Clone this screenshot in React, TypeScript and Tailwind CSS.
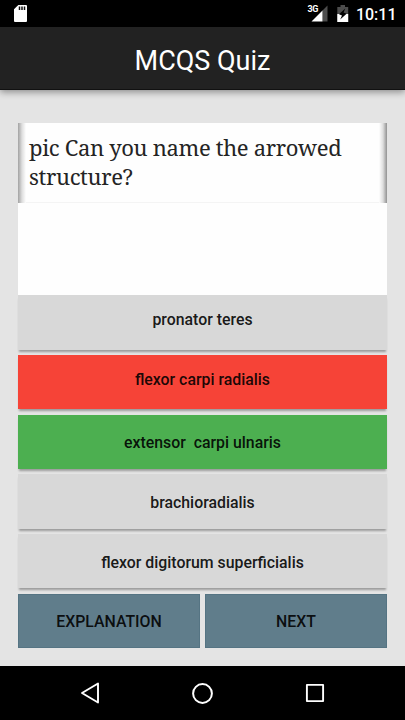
import React from "react";

type Answer = { label: string; className: string };

const answers: Answer[] = [
  { label: "pronator teres", className: "h-[55px] mb-[5px] pb-[5px] bg-[#d8d8d8]" },
  { label: "flexor carpi radialis", className: "h-[54px] mb-[6px] pb-[5px] bg-[#f64337]" },
  { label: "extensor  carpi ulnaris", className: "h-[54px] mb-[5px] pt-[2px] bg-[#4caf50]" },
  { label: "brachioradialis", className: "h-[55px] mb-[5px] pt-[2px] bg-[#d8d8d8]" },
  { label: "flexor digitorum superficialis", className: "h-[54px] mb-[6px] pt-[3px] bg-[#d8d8d8]" },
];

function StatusBar() {
  return (
    <div className="flex h-[27px] shrink-0 items-start bg-black text-white">
      <svg className="mt-[5px] ml-[14px] shrink-0" width="13" height="17" viewBox="0 0 13 17">
        <path d="M4.3 0H12Q13 0 13 1V16Q13 17 12 17H1Q0 17 0 16V4.3Z" fill="#fff" />
        <path d="M5.5 1.5V5M8 1.5V5M10.5 1.5V5" stroke="#111" strokeWidth="1.5" />
      </svg>
      <span className="mt-[4px] ml-auto text-[9px] leading-[11px] font-bold tracking-[-0.4px]">3G</span>
      <svg className="mt-[5px] -ml-[7px] shrink-0" width="17" height="17" viewBox="0 0 17 17">
        <path d="M11.5 5.5L16.5 0.5V16.5H11.5Z" fill="#4d4d4d" />
        <path d="M0.5 16.5L11.5 5.5V16.5Z" fill="#fff" />
      </svg>
      <svg className="mt-[5px] ml-[9px] shrink-0" width="12" height="17" viewBox="0 0 12 17">
        <path d="M3.5 0H8V2H11.2V17H0.3V2H3.5Z" fill="#4d4d4d" />
        <path d="M0.3 9H11.2V17H0.3Z" fill="#fff" />
        <path d="M8.2 3.6L2 9.2L5 10.6L3.2 14.4L9.6 8.8L6.6 7.4Z" fill="#000" />
      </svg>
      <span className="mt-[5px] mr-[8.5px] ml-[7px] text-[16px] leading-[20px] font-medium">10:11</span>
    </div>
  );
}

function NavigationBar() {
  return (
    <div className="flex h-[54px] shrink-0 items-center bg-black pl-[79px]">
      <svg width="22" height="22" viewBox="0 0 22 22" fill="none" stroke="#fff" strokeWidth="1.9" strokeLinejoin="round">
        <path d="M19 1.5V20.5L3 11Z" />
      </svg>
      <svg className="ml-[90px]" width="23" height="23" viewBox="0 0 23 23" fill="none" stroke="#fff" strokeWidth="2">
        <circle cx="11.5" cy="11.5" r="9.4" />
      </svg>
      <svg className="ml-[91px]" width="20" height="20" viewBox="0 0 20 20" fill="none" stroke="#fff" strokeWidth="1.9" strokeLinejoin="round">
        <rect x="1.9" y="1.9" width="16.2" height="16.2" />
      </svg>
    </div>
  );
}

export default function App() {
  return (
    <div className="flex h-[720px] w-[405px] flex-col overflow-hidden bg-[#e4e4e4] font-['Roboto',sans-serif]">
      <StatusBar />
      <header className="flex h-[63px] shrink-0 items-center justify-center border-b border-[#111] bg-[#222] pt-[5px] text-[27px] leading-[32px] text-white shadow-[0_2px_7px_rgba(0,0,0,0.4)]">
        MCQS Quiz
      </header>
      <main className="flex flex-1 flex-col px-[18px] pt-[33px]">
        <section className="flex h-[172px] shrink-0 flex-col bg-[#fefefe]">
          <div className="flex h-[80px]">
            <div className="w-[8px] shrink-0 bg-linear-to-r from-[#a2a2a2] via-[#dedede] to-[#fefefe]" />
            <p className="flex-1 border-b border-[#f4f4f4] pt-[10px] pl-[3px] font-['Noto_Serif','Droid_Serif','DejaVu_Serif',serif] text-[22px] leading-[29px] font-normal tracking-[-0.34px] whitespace-nowrap text-[#242424] [font-stretch:condensed]">
              pic Can you name the arrowed
              <br />
              structure?
            </p>
            <div className="w-[8px] shrink-0 bg-linear-to-l from-[#929292] via-[#dedede] to-[#fefefe]" />
          </div>
        </section>
        {answers.map((answer) => (
          <button
            key={answer.label}
            className={`flex shrink-0 items-center justify-center text-[15.85px] leading-[20px] font-medium whitespace-pre text-black/90 shadow-[0_3px_2px_-1px_rgba(0,0,0,0.32)] ${answer.className}`}
          >
            {answer.label}
          </button>
        ))}
        <div className="flex h-[54px] shrink-0 gap-[5px] text-[15.85px] leading-[20px] font-medium text-black/90">
          <button className="w-[182px] border border-[#557483] bg-[#607d8b] pt-[1px]">EXPLANATION</button>
          <button className="w-[182px] border border-[#557483] bg-[#607d8b] pt-[1px]">NEXT</button>
        </div>
      </main>
      <NavigationBar />
    </div>
  );
}
